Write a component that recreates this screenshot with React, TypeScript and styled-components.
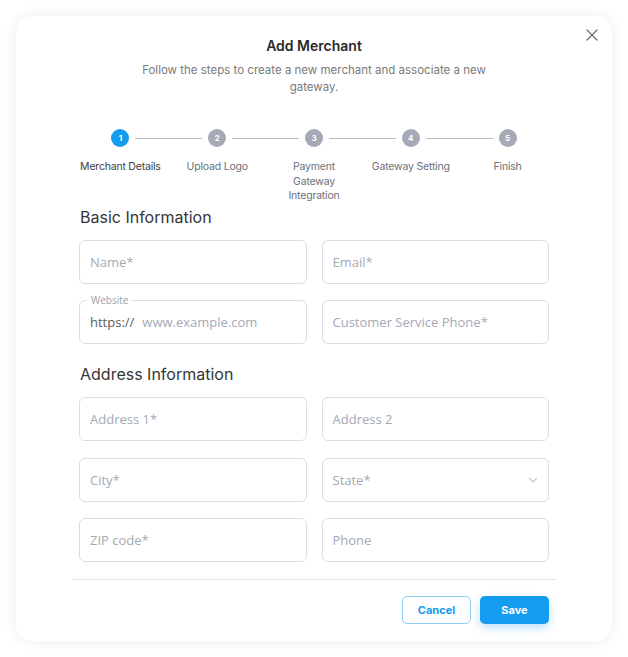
import { createGlobalStyle, styled, css } from 'styled-components'

const blue = '#149cf1'
const borderGrey = '#dcdde3'
const placeholderGrey = '#a5a9b5'

const GlobalStyle = createGlobalStyle`
  html, body {
    margin: 0;
    padding: 0;
    background: #ffffff;
  }
  body {
    font-family: Inter, "Noto Sans", sans-serif;
    -webkit-font-smoothing: antialiased;
  }
  * {
    box-sizing: border-box;
  }
`

const Page = styled.div`
  padding: 16px;
  width: 628px;
`

const Card = styled.div`
  position: relative;
  width: 596px;
  height: 625px;
  border-radius: 16px;
  background: #ffffff;
  box-shadow: 0 0 14px rgba(0, 0, 0, 0.08);
  padding: 20px 56px 0;
  display: flex;
  flex-direction: column;
`

const CloseButton = styled.button`
  position: absolute;
  top: 7px;
  right: 8px;
  width: 24px;
  height: 24px;
  border: 0;
  background: transparent;
  padding: 0;
  display: flex;
  align-items: center;
  justify-content: center;
  cursor: pointer;
`

const Title = styled.h2`
  margin: 0;
  text-align: center;
  font-size: 14px;
  line-height: 20px;
  font-weight: 600;
  color: #2a2a2a;
`

const Subtitle = styled.p`
  margin: 6px auto 0;
  max-width: 350px;
  text-align: center;
  font-size: 11.5px;
  line-height: 17px;
  color: #7a7a7a;
`

const Stepper = styled.div`
  margin-top: 33px;
  display: grid;
  grid-template-columns: repeat(5, 1fr);
`

const Step = styled.div`
  display: flex;
  flex-direction: column;
  align-items: center;
`

const StepTrack = styled.div`
  width: 100%;
  display: flex;
  align-items: center;
  gap: 6px;
`

const Connector = styled.span<{ $hidden?: boolean }>`
  flex: 1;
  height: 1px;
  background: ${({ $hidden }) => ($hidden ? 'transparent' : '#b8bbc5')};
`

const StepCircle = styled.span<{ $active?: boolean }>`
  width: 18px;
  height: 18px;
  border-radius: 50%;
  display: flex;
  align-items: center;
  justify-content: center;
  font-size: 8px;
  font-weight: 700;
  color: #ffffff;
  background: ${({ $active }) => ($active ? blue : '#a6aab6')};
`

const StepLabel = styled.span<{ $active?: boolean }>`
  margin-top: 13px;
  padding: 0 6px;
  text-align: center;
  font-size: 10.5px;
  line-height: 14.5px;
  letter-spacing: -0.2px;
  color: ${({ $active }) => ($active ? '#3e3e3e' : '#6c6f78')};
`

const SectionTitle = styled.h3<{ $first?: boolean }>`
  margin: ${({ $first }) => ($first ? '3px' : '20px')} 0 0;
  padding: 0 8px;
  font-size: 16px;
  line-height: 20px;
  font-weight: 400;
  color: #363636;
`

const FieldGrid = styled.div`
  margin-top: 13px;
  padding: 0 7px;
  display: grid;
  grid-template-columns: 1fr 1fr;
  column-gap: 15px;
  row-gap: 16.5px;
`

const Field = styled.div<{ $select?: boolean }>`
  position: relative;
  height: 44px;
  border: 1px solid ${borderGrey};
  border-radius: 6px;
  display: flex;
  align-items: center;
  padding: 0 10px;
  font-family: "Open Sans", Inter, sans-serif;
  font-size: 13px;
  ${({ $select }) =>
    $select &&
    css`
      justify-content: space-between;
      padding-right: 10px;
    `}
`

const Placeholder = styled.span`
  color: ${placeholderGrey};
  font-weight: 500;
`

const Prefix = styled.span`
  color: #5b5b5b;
  margin-right: 8px;
  font-weight: 500;
`

const FloatingLabel = styled.span`
  position: absolute;
  top: -7px;
  left: 7px;
  padding: 0 4px;
  background: #ffffff;
  font-size: 10px;
  line-height: 12px;
  color: #9a9ea9;
`

const Divider = styled.hr`
  margin: 17px 0 0;
  border: 0;
  border-top: 1px solid #e2e2e2;
`

const Actions = styled.div`
  margin-top: 16px;
  padding: 0 7px;
  display: flex;
  justify-content: flex-end;
  gap: 9px;
`

const Button = styled.button<{ $primary?: boolean }>`
  height: 28px;
  width: 69px;
  border-radius: 5px;
  font-family: Inter, sans-serif;
  font-size: 11px;
  font-weight: 700;
  cursor: pointer;
  ${({ $primary }) =>
    $primary
      ? css`
          border: 0;
          background: ${blue};
          color: #ffffff;
          box-shadow: 0 4px 10px rgba(20, 156, 241, 0.28);
        `
      : css`
          border: 1px solid #8fd0f7;
          background: #ffffff;
          color: ${blue};
        `}
`

const steps = ['Merchant Details', 'Upload Logo', 'Payment Gateway Integration', 'Gateway Setting', 'Finish']

function TextField({ placeholder }: { placeholder: string }) {
  return (
    <Field>
      <Placeholder>{placeholder}</Placeholder>
    </Field>
  )
}

export default function App() {
  return (
    <Page>
      <GlobalStyle />
      <Card>
        <CloseButton aria-label="Close">
          <svg width="12" height="12" viewBox="0 0 12 12">
            <path d="M1 1L11 11M11 1L1 11" stroke="#707070" strokeWidth="1.3" strokeLinecap="round" />
          </svg>
        </CloseButton>

        <Title>Add Merchant</Title>
        <Subtitle>Follow the steps to create a new merchant and associate a new gateway.</Subtitle>

        <Stepper>
          {steps.map((label, i) => (
            <Step key={label}>
              <StepTrack>
                <Connector $hidden={i === 0} />
                <StepCircle $active={i === 0}>{i + 1}</StepCircle>
                <Connector $hidden={i === steps.length - 1} />
              </StepTrack>
              <StepLabel $active={i === 0}>{label}</StepLabel>
            </Step>
          ))}
        </Stepper>

        <SectionTitle $first>Basic Information</SectionTitle>
        <FieldGrid>
          <TextField placeholder="Name*" />
          <TextField placeholder="Email*" />
          <Field>
            <FloatingLabel>Website</FloatingLabel>
            <Prefix>https://</Prefix>
            <Placeholder>www.example.com</Placeholder>
          </Field>
          <TextField placeholder="Customer Service Phone*" />
        </FieldGrid>

        <SectionTitle>Address Information</SectionTitle>
        <FieldGrid>
          <TextField placeholder="Address 1*" />
          <TextField placeholder="Address 2" />
          <TextField placeholder="City*" />
          <Field $select>
            <Placeholder>State*</Placeholder>
            <svg width="10" height="6" viewBox="0 0 10 6">
              <path d="M1 1L5 5L9 1" stroke="#c3c6ce" strokeWidth="1.2" fill="none" />
            </svg>
          </Field>
          <TextField placeholder="ZIP code*" />
          <TextField placeholder="Phone" />
        </FieldGrid>

        <Divider />
        <Actions>
          <Button>Cancel</Button>
          <Button $primary>Save</Button>
        </Actions>
      </Card>
    </Page>
  )
}
